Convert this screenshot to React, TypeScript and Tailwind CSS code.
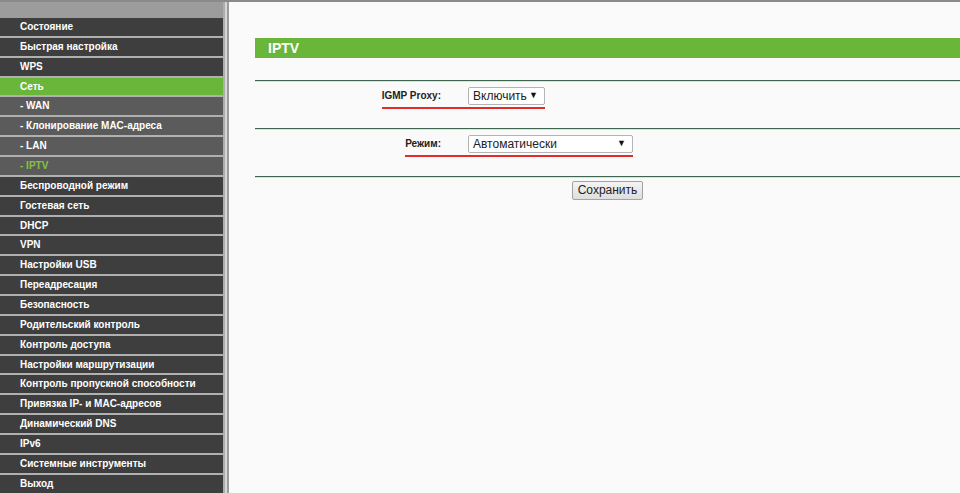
import React from 'react';

// Router admin page, "Сеть → IPTV". Left menu + IPTV settings form.

type MenuItem = { label: string; sub?: boolean; active?: boolean; current?: boolean };

const menu: MenuItem[] = [
  { label: 'Состояние' },
  { label: 'Быстрая настройка' },
  { label: 'WPS' },
  { label: 'Сеть', active: true },
  { label: '- WAN', sub: true },
  { label: '- Клонирование MAC-адреса', sub: true },
  { label: '- LAN', sub: true },
  { label: '- IPTV', sub: true, current: true },
  { label: 'Беспроводной режим' },
  { label: 'Гостевая сеть' },
  { label: 'DHCP' },
  { label: 'VPN' },
  { label: 'Настройки USB' },
  { label: 'Переадресация' },
  { label: 'Безопасность' },
  { label: 'Родительский контроль' },
  { label: 'Контроль доступа' },
  { label: 'Настройки маршрутизации' },
  { label: 'Контроль пропускной способности' },
  { label: 'Привязка IP- и MAC-адресов' },
  { label: 'Динамический DNS' },
  { label: 'IPv6' },
  { label: 'Системные инструменты' },
  { label: 'Выход' },
];

function Sidebar() {
  return (
    <div className="w-[223px] flex flex-col shrink-0 bg-[#3e3e3e]">
      <div className="h-[16px] shrink-0 bg-[#9c9c9c]" />
      {menu.map((item) => (
        <div
          key={item.label}
          className={`h-[19.87px] shrink-0 border-b-2 border-[#b0b0b0] pl-[20px] text-[10px] font-bold leading-[18px] whitespace-nowrap ${
            item.active ? 'bg-[#69b63a]' : item.sub ? 'bg-[#5b5b5b]' : 'bg-[#3e3e3e]'
          } ${item.current ? 'text-[#86c440]' : 'text-white'}`}
        >
          {item.label}
        </div>
      ))}
    </div>
  );
}

function Divider() {
  return <div className="h-[2px] border-t border-[#3c6650] bg-[#d3e9d6]" />;
}

function FakeSelect({ value, width }: { value: string; width: string }) {
  return (
    <div
      className={`${width} h-[18px] flex items-center justify-between bg-white border border-[#b4b4b4] rounded-[2px] pl-[4px] pr-[6px] text-[12px] text-[#222]`}
    >
      <span>{value}</span>
      <span className="text-[9px] text-[#111]">▼</span>
    </div>
  );
}

function FormRow({ label, value, width }: { label: string; value: string; width: string }) {
  return (
    <div className="flex">
      <div className="w-[213px] flex justify-end">
        <div className="h-[22px] border-b-2 border-[#e42b2b] pr-[27px] text-[10px] font-bold text-[#222] leading-[18px]">
          {label}
        </div>
      </div>
      <div className="h-[22px] border-b-2 border-[#e42b2b]">
        <FakeSelect value={value} width={width} />
      </div>
    </div>
  );
}

export default function App() {
  return (
    <div
      className="h-[493px] flex flex-col overflow-hidden"
      style={{ fontFamily: '"Liberation Sans", Arial, sans-serif' }}
    >
      <div className="h-[2px] bg-[#8a8a8a] shrink-0" />
      <div className="flex flex-1 min-h-0">
        <Sidebar />
        <div className="w-[2px] bg-[#adadad]" />
        <div className="w-[2px] bg-[#d6d6d6]" />
        <div className="w-[2px] bg-[#9c9c9c]" />
        <div className="flex-1 bg-[#fafafa] pl-[26px] pt-[36px]">
          <div className="h-[20px] bg-[#69b63a] pl-[13px] text-[14px] font-bold leading-[20px] text-white">IPTV</div>
          <div className="mt-[22px]">
            <Divider />
            <div className="pt-[5px] pb-[19px]">
              <FormRow label="IGMP Proxy:" value="Включить" width="w-[77px]" />
            </div>
            <Divider />
            <div className="pt-[5px] pb-[19px]">
              <FormRow label="Режим:" value="Автоматически" width="w-[165px]" />
            </div>
            <Divider />
            <div className="flex justify-center pt-[3px]">
              <button className="h-[19px] px-[5px] border border-[#a3a3a3] rounded-[2px] bg-gradient-to-b from-[#f4f4f4] to-[#dedede] text-[12px] leading-[17px] text-[#222]">
                Сохранить
              </button>
            </div>
          </div>
        </div>
      </div>
    </div>
  );
}
